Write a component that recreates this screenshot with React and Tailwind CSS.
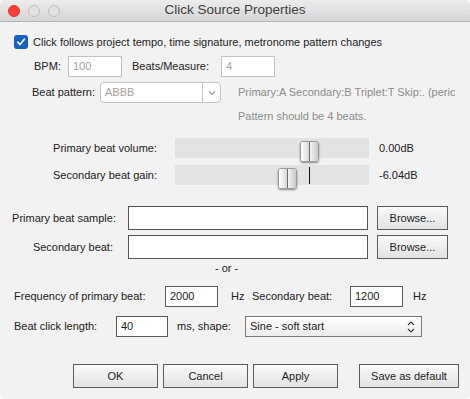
// Click Source Properties dialog (mac style)
import React from 'react';

const FONT = { fontFamily: '"Liberation Sans", Arial, sans-serif' };

function TextBox({ value = '', width, disabled = false }) {
  return (
    <div
      className={`h-[21px] bg-white flex items-center px-[4px] text-[11px] border ${
        disabled ? 'border-[#c2c2c2] text-[#a3a3a3]' : 'border-[#5a5a5a] text-[#1d1d1d]'
      }`}
      style={{ width }}
    >
      {value}
    </div>
  );
}

function Button({ label, width }) {
  return (
    <div
      className="h-[24px] flex items-center justify-center border border-[#5c5c5c] bg-gradient-to-b from-[#fafafa] to-[#e2e2e2] text-[11px] text-[#1d1d1d]"
      style={{ width }}
    >
      {label}
    </div>
  );
}

function Thumb() {
  return (
    <div className="w-[19px] h-[21px] mt-[3px] rounded-[3px] flex shadow-[0_1px_2px_rgba(0,0,0,0.45)] overflow-hidden border border-[#9a9a9a]">
      <div className="flex-1 bg-gradient-to-r from-[#ffffff] to-[#d8d8d8]" />
      <div className="w-px bg-[#6a6a6a]" />
      <div className="flex-1 bg-gradient-to-r from-[#f4f4f4] to-[#c9c9c9]" />
    </div>
  );
}

export default function App() {
  return (
    <div className="w-[470px] h-[399px] bg-white" style={FONT}>
      <div className="w-full h-full rounded-[5px] overflow-hidden bg-[#f2f2f2] flex flex-col text-[11px] text-[#222]">
        {/* Title bar */}
        <div className="h-[22px] shrink-0 flex items-center bg-gradient-to-b from-[#ececec] to-[#d5d5d5] border-b border-[#b4b4b4]">
          <div className="flex items-center gap-[8px] ml-[8px]">
            <div className="w-[12px] h-[12px] rounded-full bg-[#fc3d39] border border-[#e0342f]" />
            <div className="w-[12px] h-[12px] rounded-full bg-[#e2e2e2] border border-[#bcbcbc]" />
            <div className="w-[12px] h-[12px] rounded-full bg-[#e2e2e2] border border-[#bcbcbc]" />
          </div>
          <div className="flex-1 text-center text-[13.5px] text-[#404040] mr-[60px]">Click Source Properties</div>
        </div>

        {/* Checkbox */}
        <div className="h-[16px] mt-[12px] flex items-center">
          <div className="ml-[14px] w-[14px] h-[14px] rounded-[3px] bg-[#1c5fc4] flex items-center justify-center">
            <svg width="10" height="10" viewBox="0 0 10 10">
              <path d="M1.8 5.2 L4 7.5 L8.3 2.2" fill="none" stroke="white" strokeWidth="1.7" strokeLinecap="round" strokeLinejoin="round" />
            </svg>
          </div>
          <span className="ml-[5px]">Click follows project tempo, time signature, metronome pattern changes</span>
        </div>

        {/* BPM row */}
        <div className="h-[21px] mt-[6px] flex items-center">
          <span className="ml-[34px] w-[34px]">BPM:</span>
          <TextBox value="100" width={54} disabled />
          <span className="ml-[10px] w-[89px]">Beats/Measure:</span>
          <TextBox value="4" width={54} disabled />
        </div>

        {/* Beat pattern */}
        <div className="h-[21px] mt-[5px] flex items-center">
          <span className="ml-[32px] w-[68px]">Beat pattern:</span>
          <div className="w-[121px] h-[21px] bg-white border border-[#c4c4c4] rounded-[4px] flex items-center">
            <span className="flex-1 pl-[4px] text-[#a3a3a3]">ABBB</span>
            <div className="w-px h-full bg-[#c4c4c4]" />
            <div className="w-[17px] flex items-center justify-center">
              <svg width="8" height="6" viewBox="0 0 8 6">
                <path d="M1 1.5 L4 4.5 L7 1.5" fill="none" stroke="#9a9a9a" strokeWidth="1.1" />
              </svg>
            </div>
          </div>
          <span className="ml-[17px] text-[#8c8c8c] whitespace-nowrap overflow-hidden">Primary:A Secondary:B Triplet:T Skip:. (peric</span>
        </div>
        <div className="h-[14px] mt-[6px] flex items-center">
          <span className="ml-[238px] text-[#8c8c8c]">Pattern should be 4 beats.</span>
        </div>

        {/* Sliders */}
        <div className="h-[20px] mt-[15px] flex items-center">
          <span className="w-[157px] text-right">Primary beat volume:</span>
          <div className="ml-[18px] w-[194px] h-[20px] bg-[#e3e3e3] flex items-start">
            <div className="ml-[125px]">
              <Thumb />
            </div>
          </div>
          <span className="ml-[10px]">0.00dB</span>
        </div>
        <div className="h-[20px] mt-[7px] flex items-center">
          <span className="w-[157px] text-right">Secondary beat gain:</span>
          <div className="ml-[18px] w-[194px] h-[20px] bg-[#e3e3e3] flex items-start">
            <div className="ml-[103px]">
              <Thumb />
            </div>
            <div className="ml-[12px] mt-[2px] w-px h-[17px] bg-[#111]" />
          </div>
          <span className="ml-[10px]">-6.04dB</span>
        </div>

        {/* Samples */}
        <div className="h-[24px] mt-[21px] flex items-center">
          <span className="w-[116px] text-right">Primary beat sample:</span>
          <div className="ml-[12px] w-[240px] h-[24px] bg-white border border-[#555]" />
          <div className="ml-[9px]">
            <Button label="Browse..." width={71} />
          </div>
        </div>
        <div className="h-[24px] mt-[5px] flex items-center">
          <span className="w-[113px] text-right">Secondary beat:</span>
          <div className="ml-[15px] w-[240px] h-[24px] bg-white border border-[#555]" />
          <div className="ml-[9px]">
            <Button label="Browse..." width={71} />
          </div>
        </div>
        <div className="h-[12px] mt-[3px] flex items-center">
          <span className="ml-[215px]">- or -</span>
        </div>

        {/* Frequency */}
        <div className="h-[21px] mt-[12px] flex items-center">
          <span className="ml-[14px] w-[151px]">Frequency of primary beat:</span>
          <TextBox value="2000" width={53} />
          <span className="ml-[13px] w-[21px]">Hz</span>
          <span className="w-[98px]">Secondary beat:</span>
          <TextBox value="1200" width={53} />
          <span className="ml-[10px]">Hz</span>
        </div>
        <div className="h-[21px] mt-[9px] flex items-center">
          <span className="ml-[14px] w-[102px]">Beat click length:</span>
          <TextBox value="40" width={52} />
          <span className="ml-[9px] w-[68px]">ms, shape:</span>
          <div className="w-[177px] h-[21px] border border-[#7a7a7a] bg-gradient-to-b from-[#ffffff] to-[#ececec] flex items-center">
            <span className="flex-1 pl-[4px]">Sine - soft start</span>
            <svg width="10" height="14" viewBox="0 0 10 14" className="mr-[5px]">
              <path d="M2 5 L5 2 L8 5 M2 9 L5 12 L8 9" fill="none" stroke="#333" strokeWidth="1.1" />
            </svg>
          </div>
        </div>

        {/* Buttons */}
        <div className="h-[24px] mt-[27px] flex items-center">
          <div className="ml-[73px] flex gap-[5px]">
            <Button label="OK" width={85} />
            <Button label="Cancel" width={85} />
            <Button label="Apply" width={85} />
          </div>
          <div className="ml-[21px]">
            <Button label="Save as default" width={100} />
          </div>
        </div>
      </div>
    </div>
  );
}
